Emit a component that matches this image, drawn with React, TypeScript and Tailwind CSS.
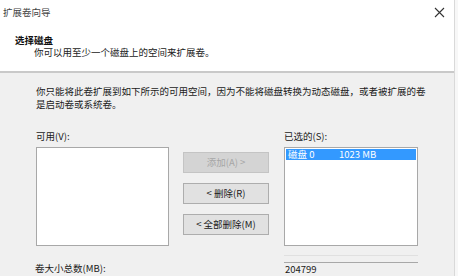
import React from "react";

const font = {
  fontFamily: '"Noto Sans CJK SC", "Liberation Sans", sans-serif',
};

function CloseIcon() {
  return (
    <svg width="11" height="11" viewBox="0 0 11 11" className="text-[#333]">
      <path d="M1 1 L10 10 M10 1 L1 10" stroke="currentColor" strokeWidth="1.1" />
    </svg>
  );
}

function WizardButton({ label, disabled }: { label: string; disabled?: boolean }) {
  return (
    <div
      className={
        disabled
          ? "flex h-[21px] items-center justify-center border border-[#c4c4c4] bg-[#d4d4d4] text-[9.5px] text-[#a6a6a6]"
          : "flex h-[21px] items-center justify-center border border-[#adadad] bg-[#e1e1e1] text-[9.5px] text-[#1a1a1a]"
      }
    >
      {label}
    </div>
  );
}

export default function App() {
  return (
    <div className="flex h-[276px] w-[458px] overflow-hidden bg-white" style={font}>
      <div className="flex w-[455px] flex-col border-r border-[#d9d9d9]">
        {/* header */}
        <div className="flex h-[71px] flex-col bg-white">
          <div className="flex items-center justify-between pl-[3px] pr-[9px] pt-[6px]">
            <span className="text-[9.5px] leading-[13px] text-[#444]">扩展卷向导</span>
            <CloseIcon />
          </div>
          <div className="mt-[15px] pl-[15px] text-[9.5px] font-bold leading-[12px] text-[#111]">
            选择磁盘
          </div>
          <div className="pl-[34px] text-[9.5px] leading-[12px] text-[#222]">
            你可以用至少一个磁盘上的空间来扩展卷。
          </div>
        </div>
        <div className="h-[2px] bg-[#c9c9c9]" />

        {/* body */}
        <div className="flex flex-1 flex-col bg-[#f0f0f0] pl-[36px] pt-[12px] text-[#1a1a1a]">
          <p className="w-[395px] text-[9.5px] leading-[13px]">
            你只能将此卷扩展到如下所示的可用空间，因为不能将磁盘转换为动态磁盘，或者被扩展的卷是启动卷或系统卷。
          </p>

          <div className="mt-[19px] flex text-[9.5px] leading-[13px]">
            <span className="w-[248px]">可用(V):</span>
            <span>已选的(S):</span>
          </div>

          <div className="mt-[4px] flex items-start">
            <div className="h-[99px] w-[133px] border border-[#a8a8a8] bg-white" />
            <div className="ml-[14px] mt-[5px] flex w-[86px] flex-col gap-[10px]">
              <WizardButton label="添加(A) >" disabled />
              <WizardButton label="< 删除(R)" />
              <WizardButton label="< 全部删除(M)" />
            </div>
            <div className="ml-[15px] h-[99px] w-[134px] border border-[#a8a8a8] bg-white p-px">
              <div className="flex h-[11px] items-center bg-[#3399ff] pl-[2px] text-[9.5px] text-white">
                <span className="w-[51px]">磁盘 0</span>
                <span>1023 MB</span>
              </div>
            </div>
          </div>

          <div className="mt-[9px] flex items-start">
            <span className="-ml-px mt-[7px] w-[249px] text-[9.5px] leading-[13px]">卷大小总数(MB):</span>
            <div className="w-[134px] border-t border-[#e0e0e0] pt-[6px]">
              <div className="border-t border-[#a8a8a8] pl-[1px] text-[9.5px] leading-[13px]">204799</div>
            </div>
          </div>
        </div>
      </div>
      <div className="flex-1 bg-[#f7f7f7]" />
    </div>
  );
}
